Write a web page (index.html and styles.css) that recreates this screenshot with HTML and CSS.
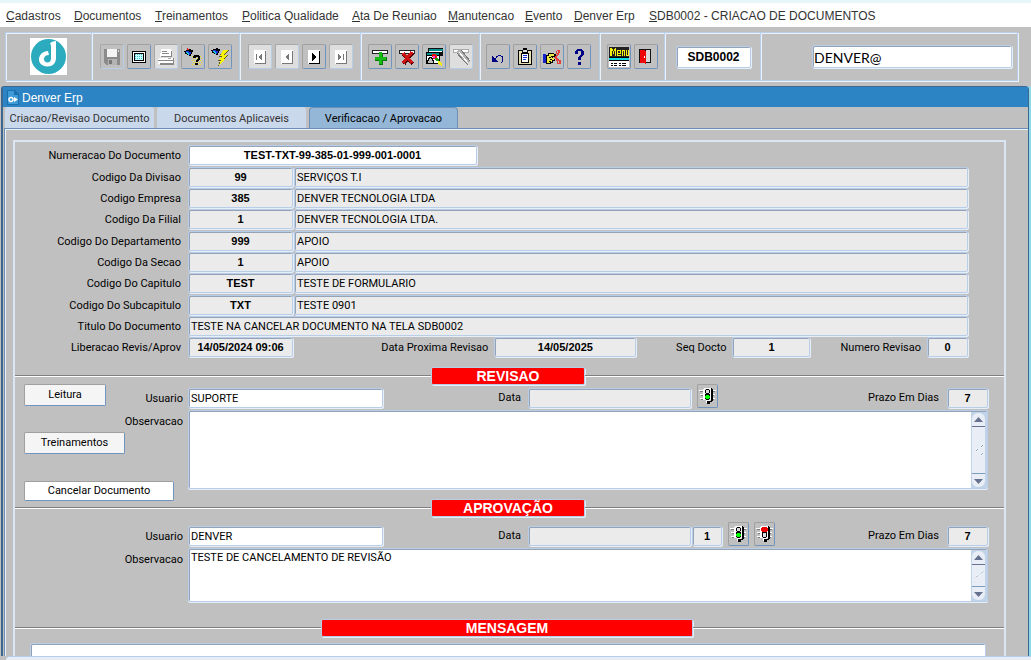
FILE: index.html
```html
<!DOCTYPE html>
<html lang="pt-BR">
<head>
<meta charset="utf-8">
<title>Denver Erp</title>
<link rel="stylesheet" href="styles.css">
</head>
<body>
<nav class="menu">
  <a href="#"><u>C</u>adastros</a>
  <a href="#"><u>D</u>ocumentos</a>
  <a href="#"><u>T</u>reinamentos</a>
  <a href="#"><u>P</u>olitica Qualidade</a>
  <a href="#"><u>A</u>ta De Reuniao</a>
  <a href="#"><u>M</u>anutencao</a>
  <a href="#"><u>E</u>vento</a>
  <a href="#"><u>D</u>enver Erp</a>
  <a href="#"><u>S</u>DB0002 - CRIACAO DE DOCUMENTOS</a>
</nav>

<header class="toolbar">
  <div class="cell cell-logo">
    <svg class="logo" viewBox="0 0 37 37" role="img" aria-label="Denver"><rect width="37" height="37" fill="#fff"/><circle cx="18.500" cy="18.500" r="17.500" fill="#2cabbf"/><path d="M20 5.500c1-1.500 3.500-2.500 6-2.500v17c0 5-3.500 8.500-8.500 8.500S9 25.500 9 21.500c0-5 4-8 9-8.500l1 4c-3 0-5 1.500-5 4 0 2 1.500 3.500 3.500 3.500s3.500-1.500 3.500-4V8c0-1-.5-2-1-2.500z" fill="#fff"/></svg>
  </div>
  <div class="cell cell-file">
    <button class="tool off" aria-label="Salvar"><svg viewBox="0 0 20 20"><path d="M2 2h16v16H4l-2-2z" fill="#8b8b8b"/><path d="M5 2h10v8H5z" fill="#f4f4f4"/><path d="M16 3h1v2h-1z" fill="#ddd"/><path d="M6 12h9v6H6z" fill="#b4b4b4"/><path d="M7 13h3v4H7z" fill="#777"/></svg></button>
    <button class="tool" aria-label="Tela"><svg viewBox="0 0 20 20"><path d="M3 4h14v12H3z" fill="#000"/><path d="M4 5h12v10H4z" fill="#fff"/><path d="M5 6h10v8H5z" fill="#000"/><path d="M6 7h8v6H6z" fill="#c8fbff"/><path d="M6 7.500h8M6 9.500h8M6 11.500h8" stroke="#3cc4d4" stroke-dasharray="1 1"/></svg></button>
    <button class="tool off pale" aria-label="Imprimir"><svg viewBox="0 0 20 20"><path d="M5 2h9l2 2v6H4z" fill="#fff"/><path d="M14 3h1v6H5v1h11V4h-1z" fill="#888"/><path d="M6 4h5v1H6zM6 6h7v1H6z" fill="#888"/><path d="M3 11h13l2 2v4H2v-5z" fill="#fff"/><path d="M2 13h15v1H2zM4 16h13v-5h1v7H4z" fill="#888"/><path d="M12 11h3v1h-3z" fill="#aaa"/></svg></button>
    <button class="tool" aria-label="Entrar consulta"><svg viewBox="0 0 20 20"><path d="M1 4h2V3h3V2h2v1h2v2H9v2H8v2H6V8H4V7H2V5H1z" fill="#000"/><path d="M3 4h3v1h2v2H7v1H5V6H3z" fill="#1d32d8"/><path d="M3 5h2v1h1v2H5V7H4V6H3z" fill="#19c9dd"/><path d="M4 1h1v1h1v1H4z" fill="#e02020"/><path d="M9 9.500h10M10 11.500h9M9 13.500h10M10 15.500h9M9 17.500h10" stroke="#f2e51b" stroke-dasharray="1 1"/><path d="M10 9h1V8h5v1h1v4h-1v1h-1v1h-2v-2h1v-1h1v-2h-2v1h-3zM12 16h3v2h-3z" fill="#000"/></svg></button>
    <button class="tool" aria-label="Executar consulta"><svg viewBox="0 0 20 20"><path d="M1 3h2V2h3V1h2v1h2v2H9v2H8v2H6V7H4V6H2V4H1z" fill="#000"/><path d="M3 3h3v1h2v2H7v1H5V5H3z" fill="#1d32d8"/><path d="M3 4h2v1h1v2H5V6H4V5H3z" fill="#19c9dd"/><path d="M13 3h6l-4 5h3l-4 4h2l-8 7 2-5H8l3-4H9z" fill="#5b5a20"/><path d="M13 3h5l-4 5h3l-4 4h2l-6 6 2-5H9l3-4h-2z" fill="#f6f20e"/></svg></button>
  </div>
  <div class="cell cell-nav">
    <button class="tool off pale" aria-label="Primeiro"><svg viewBox="0 0 20 20"><path d="M4 3h12v14H4z" fill="#fff"/><path d="M15 4h1v13H5v-1h10z" fill="#777"/><path d="M6 7h1v6H6zM12 7v6l-4-3z" fill="#777"/></svg></button>
    <button class="tool off pale" aria-label="Anterior"><svg viewBox="0 0 20 20"><path d="M4 3h12v14H4z" fill="#fff"/><path d="M15 4h1v13H5v-1h10z" fill="#777"/><path d="M12 6v8l-4-4z" fill="#777"/></svg></button>
    <button class="tool" aria-label="Seguinte"><svg viewBox="0 0 20 20"><path d="M4 3h12v14H4z" fill="#fff"/><path d="M15 4h1v13H5v-1h10z" fill="#000"/><path d="M8 6v8l4-4z" fill="#000"/></svg></button>
    <button class="tool off pale" aria-label="Ultimo"><svg viewBox="0 0 20 20"><path d="M4 3h12v14H4z" fill="#fff"/><path d="M15 4h1v13H5v-1h10z" fill="#777"/><path d="M7 7v6l4-3zM12 7h1v6h-1z" fill="#777"/></svg></button>
  </div>
  <div class="cell cell-record">
    <button class="tool" aria-label="Inserir registro"><svg viewBox="0 0 20 20"><path d="M2 3h16v4H2z" fill="#222"/><path d="M3 4h14v2H3z" fill="#fff"/><path d="M9 6h4v4h4v4h-4v4H9v-4H5v-4h4z" fill="#087608"/><path d="M9 5h3v5h4v3h-4v4H9v-4H5v-3h4z" fill="#16ba16"/></svg></button>
    <button class="tool" aria-label="Remover registro"><svg viewBox="0 0 20 20"><path d="M2 3h16v4H2z" fill="#222"/><path d="M3 4h14v2H3z" fill="#fff"/><path d="M6 7l10 10M16 6L7 17" stroke="#5b0000" stroke-width="3"/><path d="M6 6l9 10M15 5L6 16" stroke="#d01414" stroke-width="3"/></svg></button>
    <button class="tool" aria-label="Limpar"><svg viewBox="0 0 20 20"><path d="M4 1h15v8H4z" fill="#111"/><path d="M5 2h14v2H5z" fill="#008f8f"/><path d="M5 4h13v1H5z" fill="#fff"/><path d="M2 5h14v12H2z" fill="#000"/><path d="M3 6h12v2H3z" fill="#008f8f"/><path d="M3 9h12v7H3z" fill="#fff"/><path d="M3 13h1v-2h1v-1h2v1h1v2h1v3H3z" fill="#c0c0c0" stroke="#000"/><path d="M8 7h4v1h1v3h-2v1H9v-2H8z" fill="#ee1111"/><path d="M9 9h2v2H9z" fill="#f03df0"/><path d="M11 11h3v1h1v2h-3v-1h-1z" fill="#14a014"/><path d="M14 14h2v1h1v1h1v3h-1v-1h-2v-1h-1z" fill="#f2ee12"/></svg></button>
    <button class="tool off pale" aria-label="Limpar campo"><svg viewBox="0 0 20 20"><path d="M2 2h16v4H2z" fill="#aaa"/><path d="M3 3h14v2H3z" fill="#fff"/><path d="M5 5l4-3 10 12-3 4z" fill="#b4b4b4"/><path d="M6 6l6 7M12 13l5 5" stroke="#777"/><path d="M8 5l9 11" stroke="#fff"/><path d="M10 3l9 11" stroke="#777"/></svg></button>
  </div>
  <div class="cell cell-edit">
    <button class="tool" aria-label="Desfazer"><svg viewBox="0 0 20 20"><path d="M4 9v6h6z" fill="#000084"/><path d="M7 13c1-5 8-6 8-1 0 2-1 3-2 4" fill="none" stroke="#000084"/></svg></button>
    <button class="tool" aria-label="Lista"><svg viewBox="0 0 20 20"><path d="M3 3h14v15H3z" fill="#000"/><path d="M4 4h12v13H4z" fill="#e6dfb4"/><path d="M6 6h8v10H6z" fill="#000"/><path d="M7 7h6v8H7z" fill="#fff"/><path d="M7 3h1V1h4v2h1v3H7z" fill="#000"/><path d="M8 3h4v2H8z" fill="#ddd"/><path d="M8 8.500h4M8 10.500h4M8 12.500h3" stroke="#1230d0"/></svg></button>
    <button class="tool" aria-label="Cortar"><svg viewBox="0 0 20 20"><path d="M1 7h3v9H1z" fill="#1424c8"/><path d="M4 8h2V6h6v1h2v3h-3v2h2v2h-2v2H9v1H4z" fill="#000"/><path d="M5 9h2V7h5v2h-3v1h1v1h2v2h-2v2H8v1H5z" fill="#f0e94a"/><path d="M7 10h2v1H7zM8 12h2v1H8zM7 14h2v1H7z" fill="#000"/><path d="M12 10h1V9h1V8h1V7h-1V4h1V3h3v3h-1v2h-1v1h-1v2h1v1h1v1h2v4h-4v-3h-1v-2h-1v-1h-1zM15 4v2h1V4zM16 14v2h1v-2z" fill="#e04040" fill-rule="evenodd"/></svg></button>
    <button class="tool" aria-label="Ajuda"><svg viewBox="0 0 20 20"><path d="M6 4h1V3h1V2h5v1h1v1h1v4h-1v1h-1v1h-1v3H9v-3h1V9h1V8h1V4H9v3H6zM9 15h3v3H9z" fill="#000084"/></svg></button>
  </div>
  <div class="cell cell-exit">
    <button class="tool" aria-label="Menu"><svg viewBox="0 0 20 20"><path d="M0 0h20v20H0z" fill="#fff"/><path d="M0 0h20v10H0z" fill="#222"/><path d="M1 1h2v1h1v2h1V2h1V1h1v8H6V4H5v3H4V4H3v5H1zM8 3h4v4H9v1h3v1H8zM9 4v2h2V4zM13 3h3v6h-1V4h-1v5h-1zM17 3h1v5h1V3h1v6h-3z" fill="#f5f10d" fill-rule="evenodd"/><path d="M0 11h20v2H0z" fill="#14dfe8"/><path d="M0 10h20v1H0zM0 13h20v1H0zM2 16h2v1H2zM5 16h3v1H5zM10 16h2v1h-2zM13 16h4v1h-4zM2 18h2v1H2zM5 18h3v1H5zM10 18h2v1h-2zM13 18h4v1h-4z" fill="#000"/></svg></button>
    <button class="tool" aria-label="Sair"><svg viewBox="0 0 20 20"><path d="M3 2h12v14H3z" fill="#111"/><path d="M10 3h4v12h-4z" fill="#d9d9d9"/><path d="M4 3h5l1 2v12l-2-1H4z" fill="#f00808"/><path d="M8 9h1v2H8z" fill="#fff"/></svg></button>
  </div>
  <div class="cell cell-code"><input class="field code-box" aria-label="Tela" value="SDB0002"></div>
  <div class="cell cell-user"><input class="field user-box" aria-label="Usuario conectado" value="DENVER@"></div>
</header>

<main class="window">
  <h1 class="title">
    <svg class="title-icon" viewBox="0 0 12 15"><path d="M0 0h8l4 4v11H0z" fill="#1b6fab"/><path d="M1 1h6v4h4v9H1z" fill="#3e9bd8"/><circle cx="4" cy="9.500" r="2" fill="none" stroke="#fff" stroke-width="1.500"/><path d="M7 7l4 2.500L7 12z" fill="#fff"/></svg>
    Denver Erp
  </h1>
  <div class="tabs" role="tablist">
    <button class="tab" role="tab">Criacao/Revisao Documento</button>
    <button class="tab" role="tab">Documentos Aplicaveis</button>
    <button class="tab active" role="tab" aria-selected="true">Verificacao / Aprovacao</button>
  </div>
  <div class="panel">
    <form class="frame">
      <div class="groups">
        <div class="row"><label for="num">Numeracao Do Documento</label><input id="num" class="field key doc" value="TEST-TXT-99-385-01-999-001-0001"></div>
        <div class="group">
          <div class="row"><label for="div">Codigo Da Divisao</label><input id="div" class="field ro key code" readonly value="99"><input class="field ro desc" aria-label="Divisao" readonly value="SERVIÇOS T.I"></div>
          <div class="row"><label for="emp">Codigo Empresa</label><input id="emp" class="field ro key code" readonly value="385"><input class="field ro desc" aria-label="Empresa" readonly value="DENVER TECNOLOGIA LTDA"></div>
          <div class="row"><label for="fil">Codigo Da Filial</label><input id="fil" class="field ro key code" readonly value="1"><input class="field ro desc" aria-label="Filial" readonly value="DENVER TECNOLOGIA LTDA."></div>
        </div>
        <div class="group">
          <div class="row"><label for="dep">Codigo Do Departamento</label><input id="dep" class="field ro key code" readonly value="999"><input class="field ro desc" aria-label="Departamento" readonly value="APOIO"></div>
          <div class="row"><label for="sec">Codigo Da Secao</label><input id="sec" class="field ro key code" readonly value="1"><input class="field ro desc" aria-label="Secao" readonly value="APOIO"></div>
          <div class="row"><label for="cap">Codigo Do Capitulo</label><input id="cap" class="field ro key code" readonly value="TEST"><input class="field ro desc" aria-label="Capitulo" readonly value="TESTE DE FORMULARIO"></div>
        </div>
        <div class="group">
          <div class="row"><label for="sub">Codigo Do Subcapitulo</label><input id="sub" class="field ro key code" readonly value="TXT"><input class="field ro desc" aria-label="Subcapitulo" readonly value="TESTE 0901"></div>
          <div class="row"><label for="tit">Titulo Do Documento</label><input id="tit" class="field ro desc" readonly value="TESTE NA CANCELAR DOCUMENTO NA TELA SDB0002"></div>
          <div class="row dates">
            <label for="lib">Liberacao Revis/Aprov</label><input id="lib" class="field ro key code" readonly value="14/05/2024 09:06">
            <label for="prox" class="gap-large">Data Proxima Revisao</label><input id="prox" class="field ro key next" readonly value="14/05/2025">
            <label for="seq" class="gap-medium">Seq Docto</label><input id="seq" class="field ro key seq" readonly value="1">
            <label for="rev" class="gap-small">Numero Revisao</label><input id="rev" class="field ro key days" readonly value="0">
          </div>
        </div>
      </div>

      <h2 class="divider"><span class="badge">REVISAO</span></h2>
      <section class="step review">
        <div class="side">
          <div class="side-top"><button type="button" class="btn read">Leitura</button><label for="u1">Usuario</label></div>
          <label for="o1" class="note-label">Observacao</label>
          <button type="button" class="btn train">Treinamentos</button>
          <button type="button" class="btn cancel">Cancelar Documento</button>
        </div>
        <div class="main">
          <div class="line">
            <input id="u1" class="field user" value="SUPORTE">
            <label for="d1" class="date-label">Data</label><input id="d1" class="field ro date" readonly>
            <button type="button" class="light" aria-label="Liberar revisao"><svg viewBox="0 0 17 20"><path d="M0 4h5v1H0zM1 8h4v1H1zM1 12h4v1H1zM12 4h5v1h-5zM12 8h4v1h-4zM12 12h4v1h-4z" fill="#fff"/><path d="M1 5h4v1H1zM2 9h3v1H2zM2 13h3v1H2zM13 5h3v1h-3zM13 9h2v1h-2zM13 13h2v1h-2z" fill="#777"/><path d="M5 2h7v1h1v11h-2v3H7v-3H4V3h1z" fill="#fff"/><path d="M12 2h1v1h1v12h-1v1h-2v2H8v-3h4z" fill="#000"/><path d="M6 3h5v11H6z" fill="#ccc"/><path d="M7 3h3v1h1v3h-1v1h1v5h-1v1H7v-1H6V8h1V7H6V4h1z" fill="#000"/><path d="M7 4h3v3H7z" fill="#ddd"/><path d="M7 9h3v4H7zM6 10h5v2H6z" fill="#0f0"/></svg></button>
            <label for="p1" class="term">Prazo Em Dias</label><input id="p1" class="field ro key days" readonly value="7">
          </div>
          <div class="memo memo-tall"><textarea id="o1"></textarea>
            <div class="scroll" aria-hidden="true"><svg class="arrow" viewBox="0 0 13 13"><path d="M2 9l4.500-5L11 9z"/></svg><svg class="grip" viewBox="0 0 13 12"><path d="M4 7l2-2M9 3l2-2M9 11l2-2" stroke="#fff" stroke-width="2"/><path d="M4 7l2-2M9 3l2-2M9 11l2-2" stroke="#7b9dbf"/></svg><svg class="arrow" viewBox="0 0 13 13"><path d="M2 5l4.500 5L11 5z"/></svg></div>
          </div>
        </div>
      </section>

      <h2 class="divider tight"><span class="badge">APROVAÇÃO</span></h2>
      <section class="step approve">
        <div class="side">
          <div class="side-top"><label for="u2">Usuario</label></div>
          <label for="o2" class="note-label">Observacao</label>
        </div>
        <div class="main">
          <div class="line">
            <input id="u2" class="field user" value="DENVER">
            <label for="d2" class="date-label">Data</label><input id="d2" class="field ro date" readonly><input class="field ro key level" aria-label="Nivel" readonly value="1">
            <button type="button" class="light" aria-label="Aprovar"><svg viewBox="0 0 17 20"><path d="M0 4h5v1H0zM1 8h4v1H1zM1 12h4v1H1zM12 4h5v1h-5zM12 8h4v1h-4zM12 12h4v1h-4z" fill="#fff"/><path d="M1 5h4v1H1zM2 9h3v1H2zM2 13h3v1H2zM13 5h3v1h-3zM13 9h2v1h-2zM13 13h2v1h-2z" fill="#777"/><path d="M5 2h7v1h1v11h-2v3H7v-3H4V3h1z" fill="#fff"/><path d="M12 2h1v1h1v12h-1v1h-2v2H8v-3h4z" fill="#000"/><path d="M6 3h5v11H6z" fill="#ccc"/><path d="M7 3h3v1h1v3h-1v1h1v5h-1v1H7v-1H6V8h1V7H6V4h1z" fill="#000"/><path d="M7 4h3v3H7z" fill="#ddd"/><path d="M7 9h3v4H7zM6 10h5v2H6z" fill="#0f0"/></svg></button>
            <button type="button" class="light" aria-label="Reprovar"><svg viewBox="0 0 17 20"><path d="M0 4h5v1H0zM1 8h4v1H1zM1 12h4v1H1zM12 4h5v1h-5zM12 8h4v1h-4zM12 12h4v1h-4z" fill="#fff"/><path d="M1 5h4v1H1zM2 9h3v1H2zM2 13h3v1H2zM13 5h3v1h-3zM13 9h2v1h-2zM13 13h2v1h-2z" fill="#777"/><path d="M5 2h7v1h1v11h-2v3H7v-3H4V3h1z" fill="#fff"/><path d="M12 2h1v1h1v12h-1v1h-2v2H8v-3h4z" fill="#000"/><path d="M6 3h5v11H6z" fill="#ccc"/><path d="M6 8h5v5h-1v1H7v-1H6z" fill="#000"/><path d="M7 9h3v4H7z" fill="#ddd"/><path d="M6 3h5v1h1v3h-1v1H6V7H5V4h1z" fill="#e00"/></svg></button>
            <label for="p2" class="term">Prazo Em Dias</label><input id="p2" class="field ro key days" readonly value="7">
          </div>
          <div class="memo memo-short"><textarea id="o2">TESTE DE CANCELAMENTO DE REVISÃO</textarea>
            <div class="scroll" aria-hidden="true"><svg class="arrow" viewBox="0 0 13 13"><path d="M2 9l4.500-5L11 9z"/></svg><svg class="grip" viewBox="0 0 13 12"><path d="M4 8l2-2M9 4l2-2" stroke="#fff" stroke-width="2"/><path d="M4 8l2-2M9 4l2-2" stroke="#7b9dbf"/></svg><svg class="arrow" viewBox="0 0 13 13"><path d="M2 5l4.500 5L11 5z"/></svg></div>
          </div>
        </div>
      </section>

      <h2 class="divider last"><span class="badge wide">MENSAGEM</span></h2>
      <div class="message"><textarea aria-label="Mensagem"></textarea></div>
    </form>
  </div>
</main>
<footer class="status"></footer>
</body>
</html>
```
FILE: styles.css
```css
* { box-sizing: border-box; }
body {
  margin: 0;
  height: 100vh;
  display: flex;
  flex-direction: column;
  overflow: hidden;
  background: #c0c0c0;
  border-top: 3px solid #e6f6f9;
  font: 11px/14px Roboto, "Liberation Sans", sans-serif;
  color: #000;
}
button, input, textarea { font: inherit; color: inherit; margin: 0; }

.menu {
  flex: none;
  display: grid;
  grid-template-columns: 68px 81px 87px 110px 96px 77px 49px 75px 1fr;
  height: 24px;
  line-height: 26px;
  padding-left: 6px;
  background: #fff;
  font-family: "Liberation Sans", Arial, sans-serif;
  font-size: 12px;
}
.menu a { color: #333; text-decoration: none; white-space: nowrap; }

.toolbar {
  flex: none;
  display: flex;
  height: 49px;
  margin: 5px 13px 5px 5px;
  border: 1px solid #b8cde8;
  box-shadow: inset 1px 1px #e9f1fa, 1px 1px #e9f1fa;
}
.cell {
  flex: none;
  display: flex;
  align-items: center;
  gap: 3px;
  border-left: 1px solid #b8cde8;
  box-shadow: inset 1px 0 #e9f1fa;
}
.cell-logo { width: 85px; border-left: 0; padding-left: 24px; }
.logo { width: 37px; height: 37px; }
.cell-file { width: 148px; padding-left: 8px; }
.cell-nav { width: 121px; padding-left: 8px; }
.cell-record { width: 119px; padding-left: 7px; }
.cell-edit { width: 120px; padding-left: 6px; }
.cell-exit { width: 65px; padding-left: 7px; }
.cell-code { width: 96px; padding-left: 11px; }
.cell-user { flex: 1; justify-content: flex-end; padding-right: 5px; }

.tool, .light {
  display: grid;
  place-items: center;
  padding: 1px;
  border: 1px solid;
  border-color: #a0a0a0 #6f94bd #6f94bd #a0a0a0;
  border-radius: 2px;
  background: #c0c0c0;
}
.tool { width: 24px; height: 25px; }
.tool.off { border-color: #a8a8a8 #b8cde8 #b8cde8 #a8a8a8; }
.tool.pale { background: #dedede; }
.tool svg { width: 20px; height: 20px; shape-rendering: crispEdges; }

.field {
  min-width: 0;
  height: 20px;
  padding: 0 2px;
  border: 1px solid #b8cde8;
  border-radius: 2px;
  background: #fff;
  box-shadow: inset 1px 1px #96a3b4, 1px 1px #e6eef8;
  outline: 0;
}
.field.ro { background: #ebebeb; }
.field.key { font-family: "Liberation Sans", Arial, sans-serif; font-weight: bold; text-align: center; }
.field.code-box { width: 75px; height: 22px; font: bold 12px "Liberation Sans", Arial, sans-serif; text-align: center; }
.field.user-box { flex: 0 1 200px; height: 23px; padding: 2px 1px 0; font: 14px/20px Lato, sans-serif; }

.window {
  flex: 1;
  min-height: 0;
  display: flex;
  flex-direction: column;
  margin: 0 2px 0 1px;
  border: solid #3d6791;
  border-width: 1px 1px 0 2px;
  border-radius: 3px 4px 0 0;
  box-shadow: 3px 0 #8ed9e8;
}
.title {
  flex: none;
  display: flex;
  align-items: center;
  gap: 3px;
  height: 20px;
  margin: 0;
  padding: 1px 0 0 4px;
  background: #2c84c4;
  color: #fff;
  font: 12px "Liberation Sans", Arial, sans-serif;
}
.title-icon { width: 12px; height: 15px; }
.tabs { flex: none; display: flex; gap: 3px; height: 21px; padding-left: 2px; }
.tab {
  width: 149px;
  padding: 2px 0 0;
  border: 0;
  border-radius: 3px 3px 0 0;
  background: #cad8eb;
  color: #333;
}
.tab.active {
  border: solid #6b8fb5;
  border-width: 1px 1px 0;
  border-radius: 4px 4px 0 0;
  padding-top: 1px;
  background: #94b7d8;
  color: #000;
}
.panel {
  flex: 1;
  min-height: 0;
  margin-left: 1px;
  padding: 11px 22px 0 8px;
  overflow: hidden;
  border: solid #6b8fb5;
  border-width: 1px 0 0 1px;
  box-shadow: inset 1px 1px #edf2f8;
}
.frame { border: 2px solid #dbe6f4; border-bottom: 0; height: 100%; overflow: hidden; }

.groups { display: flex; flex-direction: column; gap: 1px; padding: 3px 36px 0 0; }
.row { display: flex; height: 21px; gap: 1px; }
.row label, .line label { line-height: 21px; white-space: nowrap; text-align: right; }
.row > label:first-child { flex: none; width: 166px; margin-right: 6px; }
.doc { width: 289px; }
.code { flex: none; width: 105px; }
.desc { flex: 1; }
.next { width: 142px; }
.seq { width: 78px; }
.days { flex: none; width: 41px; }
.gap-large, .gap-medium, .gap-small { margin-right: 5px; }
.gap-large { flex: 9 1 auto; }
.gap-medium { flex: 4 1 auto; }
.gap-small { flex: 3 1 auto; }

.divider {
  display: flex;
  align-items: center;
  height: 17px;
  margin: 9px 0 0;
  font: bold 14px/16px "Liberation Sans", Arial, sans-serif;
}
.divider::before, .divider::after {
  content: "";
  flex: 1;
  height: 2px;
  background: linear-gradient(#808080 50%, #fff 50%);
}
.divider::after { min-width: 419px; }
.divider.tight { margin-top: -2px; }
.divider.last { margin-top: 17px; }
.divider.last::after { min-width: 311px; }
.badge {
  width: 154px;
  height: 18px;
  border: 1px solid #b8cde8;
  border-radius: 2px;
  box-shadow: 1px 1px #e6eef8;
  background: #f00;
  color: #fff;
  text-align: center;
}
.badge.wide { width: 372px; }

.step { display: grid; grid-template-columns: 173px 1fr; padding-right: 16px; }
.side { display: flex; flex-direction: column; align-items: flex-start; padding: 0 5px 0 9px; }
.side-top { display: flex; align-self: stretch; justify-content: space-between; height: 31px; }
.side-top label { margin-left: auto; padding-top: 8px; }
.note-label { align-self: flex-end; height: 14px; }
.btn {
  height: 22px;
  padding: 0;
  border: 1px solid;
  border-color: #a0a0a0 #6f94bd #6f94bd #a0a0a0;
  border-radius: 2px;
  background: #f5f5f5;
}
.read { width: 82px; }
.train { width: 101px; margin-top: 3px; }
.cancel { width: 150px; height: 20px; margin-top: 27px; background: #fff; }
.main { display: flex; flex-direction: column; }
.review .main { padding-top: 4px; }
.approve .main { padding-top: 10px; }
.approve .side { padding-top: 6px; }
.line { display: flex; align-items: flex-end; height: 20px; margin-bottom: 2px; }
.user { width: 195px; }
.date-label { width: 138px; margin-right: 7px; }
.date { width: 163px; margin-right: 1px; }
.level { width: 30px; margin-right: 1px; }
.light { width: 21px; height: 24px; margin-left: 5px; }
.light svg { width: 17px; height: 20px; shape-rendering: crispEdges; }
.term { margin: 0 8px 0 auto; }
.memo {
  display: flex;
  border: 1px solid #b8cde8;
  border-radius: 2px;
  background: #fff;
  box-shadow: inset 1px 1px #96a3b4, 0 1px #e6eef8;
}
.memo-tall { height: 79px; }
.memo-short { height: 54px; }
.memo textarea { flex: 1; padding: 2px; border: 0; background: none; resize: none; outline: 0; }
.scroll {
  width: 16px;
  margin-top: 1px;
  padding: 1px 2px 1px 1px;
  display: flex;
  flex-direction: column;
  background: #c1d3e8;
}
.scroll svg { width: 13px; background: #e9eef6; }
.scroll .arrow { flex: none; height: 13px; fill: #66718f; }
.scroll .arrow:first-child { border-radius: 6px 6px 0 0; }
.scroll .arrow:last-child { border-radius: 0 0 6px 6px; }
.scroll .grip { flex: 1; min-height: 0; border-top: 1px solid #66718f; border-bottom: 1px solid #7b9dbf; }
.message { padding: 7px 18px 0 15px; }
.message textarea {
  display: block;
  width: 100%;
  height: 60px;
  border: 1px solid #b8cde8;
  border-radius: 2px;
  box-shadow: inset 1px 1px #96a3b4;
  resize: none;
}
.status {
  flex: none;
  height: 4px;
  margin-left: 6px;
  border-top: 1px solid #b8cde8;
  border-radius: 4px 0 0 0;
  background: #e6edf7;
}
```
